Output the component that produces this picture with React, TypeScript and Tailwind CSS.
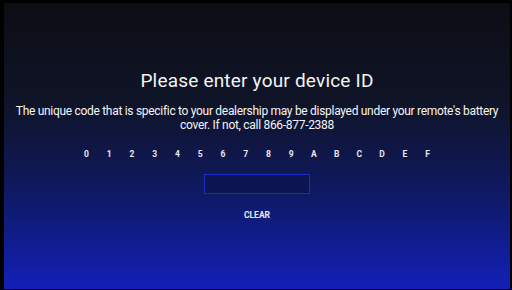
const KEYS = ["0", "1", "2", "3", "4", "5", "6", "7", "8", "9", "A", "B", "C", "D", "E", "F"];

export default function App() {
  return (
    <div className="w-[512px] h-[290px] bg-black pl-[4px] pt-[3px] pr-[2px] pb-[1px]">
      <div
        className="h-full w-full flex flex-col items-center text-white bg-[linear-gradient(to_bottom,#0c0e14_0%,#0f1428_35%,#0f1960_65%,#1220b8_100%)]"
        style={{ fontFamily: "Roboto, 'Noto Sans', sans-serif" }}
      >
        <h1 className="mt-[67px] text-[19px] leading-[22px] tracking-[0.2px] text-[#f4f4f4]">
          Please enter your device ID
        </h1>
        <p className="mt-[12px] w-[500px] text-center text-[12px] leading-[14px] tracking-[-0.3px] text-[#f4f4f4]">
          The unique code that is specific to your dealership may be displayed under your remote's battery cover. If
          not, call 866-877-2388
        </p>
        <div className="mt-[17px] flex">
          {KEYS.map((k) => (
            <span key={k} className="w-[22.75px] text-center text-[8.5px] leading-[10px] font-bold text-[#e8e8ee]">
              {k}
            </span>
          ))}
        </div>
        <div className="mt-[15px] w-[106px] h-[20px] border-[1.5px] border-[#1a2cc4] bg-[#0d1550]" />
        <button className="mt-[16px] text-[8.5px] leading-[10px] font-bold text-[#e8e8f0]">CLEAR</button>
      </div>
    </div>
  );
}
